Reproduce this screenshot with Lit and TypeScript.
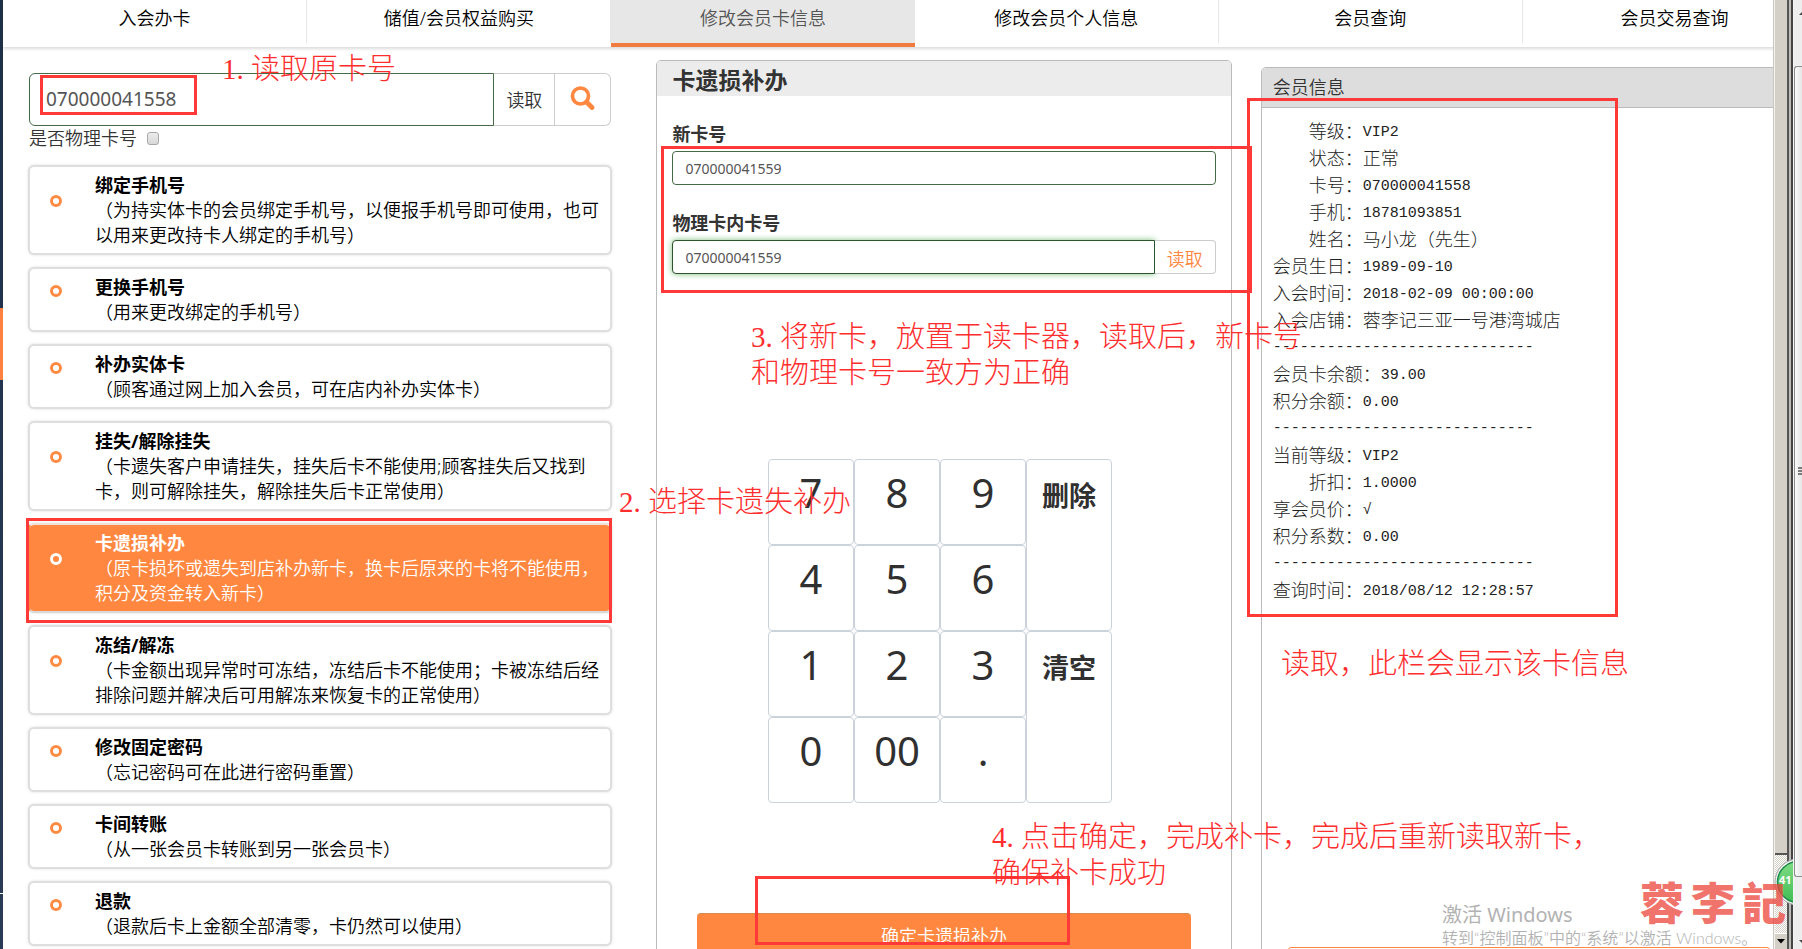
import { LitElement, html, css } from "lit";
import { customElement, state } from "lit/decorators.js";
import { classMap } from "lit/directives/class-map.js";

const TABS = ["入会办卡", "储值/会员权益购买", "修改会员卡信息", "修改会员个人信息", "会员查询", "会员交易查询"];

const ACTIONS = [
  { title: "绑定手机号", desc: "（为持实体卡的会员绑定手机号，以便报手机号即可使用，也可以用来更改持卡人绑定的手机号）" },
  { title: "更换手机号", desc: "（用来更改绑定的手机号）" },
  { title: "补办实体卡", desc: "（顾客通过网上加入会员，可在店内补办实体卡）" },
  { title: "挂失/解除挂失", desc: "（卡遗失客户申请挂失，挂失后卡不能使用;顾客挂失后又找到卡，则可解除挂失，解除挂失后卡正常使用）" },
  { title: "卡遗损补办", desc: "（原卡损坏或遗失到店补办新卡，换卡后原来的卡将不能使用，积分及资金转入新卡）" },
  { title: "冻结/解冻", desc: "（卡金额出现异常时可冻结，冻结后卡不能使用；卡被冻结后经排除问题并解决后可用解冻来恢复卡的正常使用）" },
  { title: "修改固定密码", desc: "（忘记密码可在此进行密码重置）" },
  { title: "卡间转账", desc: "（从一张会员卡转账到另一张会员卡）" },
  { title: "退款", desc: "（退款后卡上金额全部清零，卡仍然可以使用）" },
];

const KEYS = ["7", "8", "9", "删除", "4", "5", "6", "1", "2", "3", "清空", "0", "00", "."];

type Row = { label: string; value: string; wide?: boolean };
const GROUPS: Row[][] = [
  [
    { label: "等级", value: "VIP2" },
    { label: "状态", value: "正常", wide: true },
    { label: "卡号", value: "070000041558" },
    { label: "手机", value: "18781093851" },
    { label: "姓名", value: "马小龙（先生）", wide: true },
    { label: "会员生日", value: "1989-09-10" },
    { label: "入会时间", value: "2018-02-09 00:00:00" },
    { label: "入会店铺", value: "蓉李记三亚一号港湾城店", wide: true },
  ],
  [
    { label: "会员卡余额", value: "39.00" },
    { label: "积分余额", value: "0.00" },
  ],
  [
    { label: "当前等级", value: "VIP2" },
    { label: "折扣", value: "1.0000" },
    { label: "享会员价", value: "√" },
    { label: "积分系数", value: "0.00" },
  ],
  [{ label: "查询时间", value: "2018/08/12 12:28:57" }],
];

@customElement("nav-tabs")
class NavTabs extends LitElement {
  static styles = css`
    :host { display: block; }
    .tabs { display: flex; height: 47px; box-shadow: 0 2px 3px #dcdcdc; background: #fff; }
    .tab {
      flex: 1; height: 43px; text-align: center; font-size: 18px; line-height: 37px;
      color: #000; text-decoration: none; border-right: 1px solid #e7e7e7; box-sizing: border-box;
    }
    .tab.active { height: 47px; background: #e7e7e7; color: #555; border-right: 0; border-bottom: 4px solid #f07c40; }
  `;
  render() {
    return html`<nav class="tabs">
      ${TABS.map((t, i) => html`<a href="#" class=${classMap({ tab: true, active: i === 2 })}>${t}</a>`)}
    </nav>`;
  }
}

@customElement("action-list")
class ActionList extends LitElement {
  @state() selected = 4;
  static styles = css`
    :host { display: block; }
    .list { display: flex; flex-direction: column; gap: 12px; }
    .card {
      display: flex; align-items: center; box-sizing: border-box; padding: 6px 8px 5px 0;
      border: 2px solid #dedede; border-radius: 6px; box-shadow: 0 0 3px #ddd;
      font-size: 18px; line-height: 25px; color: #000; background: #fff;
    }
    .card.active { background: #ff8740; color: #fff; border-color: #f0e2d8 #ff8740 #d8d8d8; background-clip: padding-box; }
    .dot {
      appearance: none; flex: none; width: 12px; height: 12px; margin: 0 33px 19px 20px;
      border: 3px solid #ff8b43; border-radius: 50%; background: #fff;
    }
    .active .dot { border-color: #fff; background: transparent; }
    .title { display: block; font-weight: 700; }
    .desc { display: block; }
    .copy { flex: 1; min-width: 0; }
  `;
  render() {
    return html`<div class="list">
      ${ACTIONS.map(
        (a, i) => html`<label class=${classMap({ card: true, active: i === this.selected })}>
          <input class="dot" type="radio" name="action" .checked=${i === this.selected} @change=${() => (this.selected = i)} />
          <span class="copy"><span class="title">${a.title}</span><span class="desc">${a.desc}</span></span>
        </label>`
      )}
    </div>`;
  }
}

@customElement("key-pad")
class KeyPad extends LitElement {
  static styles = css`
    :host { display: block; }
    .pad { display: grid; grid-template-columns: repeat(4, 86px); grid-auto-rows: 86px; justify-content: center; padding-right: 8px; }
    .key {
      display: flex; justify-content: center; align-items: flex-start; padding: 5px 0 0;
      border: 1px solid #cbd2da; border-radius: 4px; background: #fff; color: #303030;
      font-family: inherit; font-size: 40px; line-height: 56px;
    }
    .tall { grid-row: span 2; font-size: 27px; line-height: 62px; font-weight: 700; }
  `;
  render() {
    return html`<div class="pad">
      ${KEYS.map((k) => html`<button type="button" class=${classMap({ key: true, tall: k === "删除" || k === "清空" })}>${k}</button>`)}
    </div>`;
  }
}

@customElement("member-info")
class MemberInfo extends LitElement {
  static styles = css`
    :host { display: block; }
    .panel { border: 1px solid #bbb; border-radius: 5px 5px 0 0; height: 100%; box-sizing: border-box; }
    .head { margin: 0; padding: 0 11px; font-size: 18px; font-weight: inherit; line-height: 39px; color: #333; background: #ddd; border-bottom: 1px solid #bbb; border-radius: 4px 4px 0 0; }
    .body { padding: 10px 11px; font-size: 18px; line-height: 27px; color: #222; font-weight: 300; }
    .group { margin: 0; }
    .row { display: flex; height: 27px; white-space: nowrap; }
    .label { min-width: 90px; text-align: right; }
    .value { margin: 0; font-family: "Liberation Mono", monospace; font-size: 15px; line-height: 29px; }
    .value.wide { font-family: inherit; font-size: 18px; line-height: 27px; }
    .rule { font-family: "Liberation Mono", monospace; font-size: 15px; height: 27px; overflow: hidden; }
  `;
  render() {
    return html`<section class="panel">
      <h2 class="head">会员信息</h2>
      <div class="body">
        ${GROUPS.map(
          (g, i) => html`${i ? html`<div class="rule">${"-".repeat(29)}</div>` : ""}
            <dl class="group">
              ${g.map(
                (r) => html`<div class="row">
                  <dt class="label">${r.label}：</dt>
                  <dd class=${classMap({ value: true, wide: !!r.wide })}>${r.value}</dd>
                </div>`
              )}
            </dl>`
        )}
      </div>
    </section>`;
  }
}

@customElement("mark-layer")
class MarkLayer extends LitElement {
  static styles = css`
    :host { position: absolute; inset: 0; pointer-events: none; z-index: 2; }
    .box { position: absolute; box-sizing: border-box; border: 3px solid #ff3838; }
    .note {
      position: absolute; margin: 0; white-space: pre; color: #ff2e2e; font-weight: 300;
      font-family: "Liberation Serif", "Noto Sans CJK SC", serif; font-size: 29px; line-height: 36px;
    }
    .b1 { left: 40px; top: 75px; width: 157px; height: 40px; }
    .b2 { left: 26px; top: 518px; width: 586px; height: 105px; }
    .b3 { left: 661px; top: 146px; width: 591px; height: 147px; }
    .b4 { left: 1247px; top: 98px; width: 371px; height: 519px; }
    .b5 { left: 755px; top: 876px; width: 315px; height: 69px; }
    .n1 { left: 222px; top: 51px; }
    .n2 { left: 619px; top: 484px; }
    .n3 { left: 751px; top: 319px; }
    .n4 { left: 992px; top: 819px; }
    .n5 { left: 1281px; top: 646px; }
  `;
  render() {
    return html`
      <div class="box b1"></div><div class="box b2"></div><div class="box b3"></div>
      <div class="box b4"></div><div class="box b5"></div>
      <p class="note n1">1. 读取原卡号</p>
      <p class="note n2">2. 选择卡遗失补办</p>
      <p class="note n3">3. 将新卡，放置于读卡器，读取后，新卡号<br />和物理卡号一致方为正确</p>
      <p class="note n4">4. 点击确定，完成补卡，完成后重新读取新卡，<br />确保补卡成功</p>
      <p class="note n5">读取，此栏会显示该卡信息</p>
    `;
  }
}

@customElement("app-root")
class AppRoot extends LitElement {
  static styles = css`
    :host {
      display: flex; position: relative; height: 100vh; overflow: hidden; background: #fff; font-weight: 350;
      font-family: "Noto Sans", "Noto Sans CJK SC", sans-serif; text-spacing-trim: space-all;
    }
    button, input { font-weight: inherit; }
    .rail { flex: none; width: 3px; display: flex; flex-direction: column; background: linear-gradient(#1d3048, #2b3b55); }
    .rail-mark { margin-top: 308px; height: 72px; background: #ff8040; }
    .rail-line { margin-top: 513px; height: 1px; background: #fff; }
    .view { flex: 1; min-width: 0; overflow: hidden; }
    .page { width: 103%; }
    .columns { display: grid; grid-template-columns: 584fr 590fr 566fr; column-gap: 29px; padding-left: 25px; }
    .left { padding-top: 26px; }
    .search { display: flex; height: 53px; margin: 0 1px; }
    .search-input {
      flex: 1; min-width: 0; box-sizing: border-box; padding: 0 16px 2px; border: 1px solid #446b46; border-radius: 6px 0 0 6px;
      font-family: inherit; font-size: 19px; font-weight: 400; color: #555; outline: 0;
    }
    .search-btn {
      box-sizing: border-box; width: 61px; padding: 0 0 2px; border: 1px solid #ccc; border-left: 0; background: #fff;
      font-family: inherit; font-size: 18px; color: #333; display: flex; align-items: center; justify-content: center;
    }
    .search-btn.last { width: 56px; border-radius: 0 6px 6px 0; }
    .check { display: flex; align-items: center; gap: 10px; height: 25px; margin: 0 1px 14px; font-size: 18px; line-height: 25px; color: #333; }
    .tick {
      appearance: none; width: 12px; height: 13px; margin: 0; border: 1px solid #a8a8a8; border-radius: 3px;
      background: linear-gradient(#ececec, #d8d8d8);
    }
    .mid { padding: 13px 0 0 15px; }
    .panel { border: 1px solid #bbb; border-radius: 5px 5px 0 0; min-height: 1000px; }
    .head { margin: 0; padding: 0 15px; height: 35px; line-height: 38px; font-size: 23px; color: #333; background: #ececec; border-radius: 4px 4px 0 0; }
    .form { padding: 23px 15px 0; }
    .field { margin-bottom: 23px; }
    .label { display: block; margin-bottom: 2px; font-size: 18px; line-height: 30px; font-weight: 700; color: #333; }
    .line { display: flex; height: 34px; }
    .input {
      flex: 1; min-width: 0; box-sizing: border-box; padding: 0 12px; border: 1px solid #446b46; border-radius: 4px;
      font-family: inherit; font-size: 14px; font-weight: 400; color: #555; outline: 0;
    }
    .input.focus { border: 1px solid #2b542c; border-radius: 4px 0 0 4px; box-shadow: 0 0 6px #7dc07f; }
    .read { width: 61px; padding: 2px 0 0; border: 1px solid #ccc; border-left: 0; border-radius: 0 4px 4px 0; background: #fff; color: #ff8740; font-family: inherit; font-size: 18px; }
    .pad { padding-top: 162px; font-weight: 400; }
    .submit {
      display: block; box-sizing: border-box; width: calc(100% - 50px); height: 42px; margin: 110px 25px 0; border: 0; border-top: 1px solid #d88c4c; border-radius: 4px 4px 0 0;
      background: #ff8740; color: #fff; font-family: inherit; font-size: 18px; padding: 0;
    }
    .right { padding-top: 20px; }
    .scroll {
      flex: none; width: 15px; box-sizing: border-box; display: flex; flex-direction: column;
      border-left: 1px solid #f5f3ef; border-right: 2px solid #555; background: #d4d0c8; box-shadow: -1px 0 0 #cbc7bf;
    }
    .thumb { flex: 853; border-bottom: 2px solid #555; }
    .track { flex: 78; background: repeating-conic-gradient(#fff 0 25%, #d4d0c8 0 50%) 0 0 / 2px 2px; }
    .arrow { flex: none; height: 16px; display: flex; align-items: center; justify-content: center; border-top: 1px solid #fff; box-sizing: border-box; }
    .edge { flex: none; width: 5px; box-sizing: border-box; border-left: 2px solid #bdbbb7; border-right: 1px solid #f4f4f4; background: #444; }
    .outer { flex: none; width: 8px; display: flex; flex-direction: column; background: #eee; overflow: hidden; }
    .up { flex: 66; }
    .grab { flex: 811; border: 1px solid #8c8c8c; border-right: 0; border-radius: 3px 0 0 3px; background: linear-gradient(90deg, #fafafa, #e6e6e6); display: flex; align-items: center; justify-content: flex-end; }
    .down { flex: 72; display: flex; align-items: flex-end; justify-content: flex-end; }
    .badge { position: absolute; right: 9px; top: 858px; width: 19px; height: 48px; overflow: hidden; z-index: 1; }
    .brand {
      position: absolute; right: 16px; bottom: 23px; z-index: 3; display: flex; gap: 7px;
      font-family: "Noto Sans CJK TC", sans-serif; font-size: 44px; line-height: 50px; font-weight: 900; color: #eb453cc4;
    }
    .system {
      position: absolute; left: 1442px; bottom: 0; z-index: 3; color: #b2b2b2; white-space: nowrap;
      font-family: "Lato", "Noto Sans CJK SC", sans-serif; font-size: 16px; line-height: 22px;
    }
    .system-title { font-family: "Noto Sans", "Noto Sans CJK SC", sans-serif; font-size: 20px; line-height: 24px; font-weight: 400; }
    .next { position: absolute; left: 1288px; right: 32px; bottom: -4px; height: 6px; box-sizing: border-box; border: 1px solid #ff8740; border-radius: 4px; }
  `;
  render() {
    return html`
      <div class="rail"><div class="rail-mark"></div><div class="rail-line"></div></div>
      <main class="view">
        <div class="page">
          <nav-tabs></nav-tabs>
          <div class="columns">
            <div class="left">
              <div class="search">
                <input class="search-input" aria-label="卡号" .value=${"070000041558"} />
                <button type="button" class="search-btn">读取</button>
                <button type="button" class="search-btn last" aria-label="查询">
                  <svg width="25" height="25" viewBox="0 0 25 25" fill="none" stroke="#ff8740">
                    <circle cx="10.5" cy="10" r="8" stroke-width="3.6" />
                    <path d="M16.5 16 L22 21.5" stroke-width="4.8" stroke-linecap="round" />
                  </svg>
                </button>
              </div>
              <label class="check">是否物理卡号 <input class="tick" type="checkbox" /></label>
              <action-list></action-list>
            </div>
            <div class="mid">
              <section class="panel">
                <h2 class="head">卡遗损补办</h2>
                <form class="form">
                  <div class="field">
                    <label class="label" for="new-card">新卡号</label>
                    <div class="line"><input id="new-card" class="input" .value=${"070000041559"} /></div>
                  </div>
                  <div class="field">
                    <label class="label" for="inner-card">物理卡内卡号</label>
                    <div class="line">
                      <input id="inner-card" class="input focus" .value=${"070000041559"} />
                      <button type="button" class="read">读取</button>
                    </div>
                  </div>
                  <key-pad class="pad"></key-pad>
                  <button type="button" class="submit">确定卡遗损补办</button>
                </form>
              </section>
            </div>
            <member-info class="right"></member-info>
          </div>
        </div>
      </main>
      <div class="scroll">
        <div class="thumb"></div>
        <div class="track"></div>
        <div class="arrow"><svg width="8" height="5" viewBox="0 0 8 5"><path d="M0 0H8L4 4.5Z" fill="#000" /></svg></div>
      </div>
      <div class="edge"></div>
      <div class="outer">
        <div class="up"><svg width="8" height="8" viewBox="0 0 8 8"><path d="M5 6L9 2V6Z" fill="#444" /></svg></div>
        <div class="grab"><svg width="4" height="9" viewBox="0 0 4 9"><path d="M0 1H4M0 4H4M0 7H4" stroke="#555" stroke-width="1.5" /></svg></div>
        <div class="down"><svg width="3" height="11" viewBox="0 0 3 11"><path d="M0 2H3V5Z" fill="#444" /></svg></div>
      </div>
      <div class="badge">
        <svg width="48" height="48" viewBox="0 0 48 48">
          <defs><linearGradient id="g" x1="0" y1="0" x2="0" y2="1"><stop offset="0" stop-color="#7fdc84" /><stop offset="1" stop-color="#41bd55" /></linearGradient></defs>
          <circle cx="24" cy="24" r="23" fill="#f2f2f2" stroke="#a5a5a5" />
          <circle cx="24" cy="24" r="20.5" fill="url(#g)" stroke="#1d8a4a" stroke-width="1.5" />
          <text x="5" y="26" font-family="Noto Sans, sans-serif" font-size="11" font-weight="700" fill="#fff">41</text>
        </svg>
      </div>
      <div class="next"></div>
      <div class="system"><div class="system-title">激活 Windows</div>转到“控制面板”中的“系统”以激活 Windows。</div>
      <div class="brand"><span>蓉</span><span>李</span><span>記</span></div>
      <mark-layer></mark-layer>
    `;
  }
}
